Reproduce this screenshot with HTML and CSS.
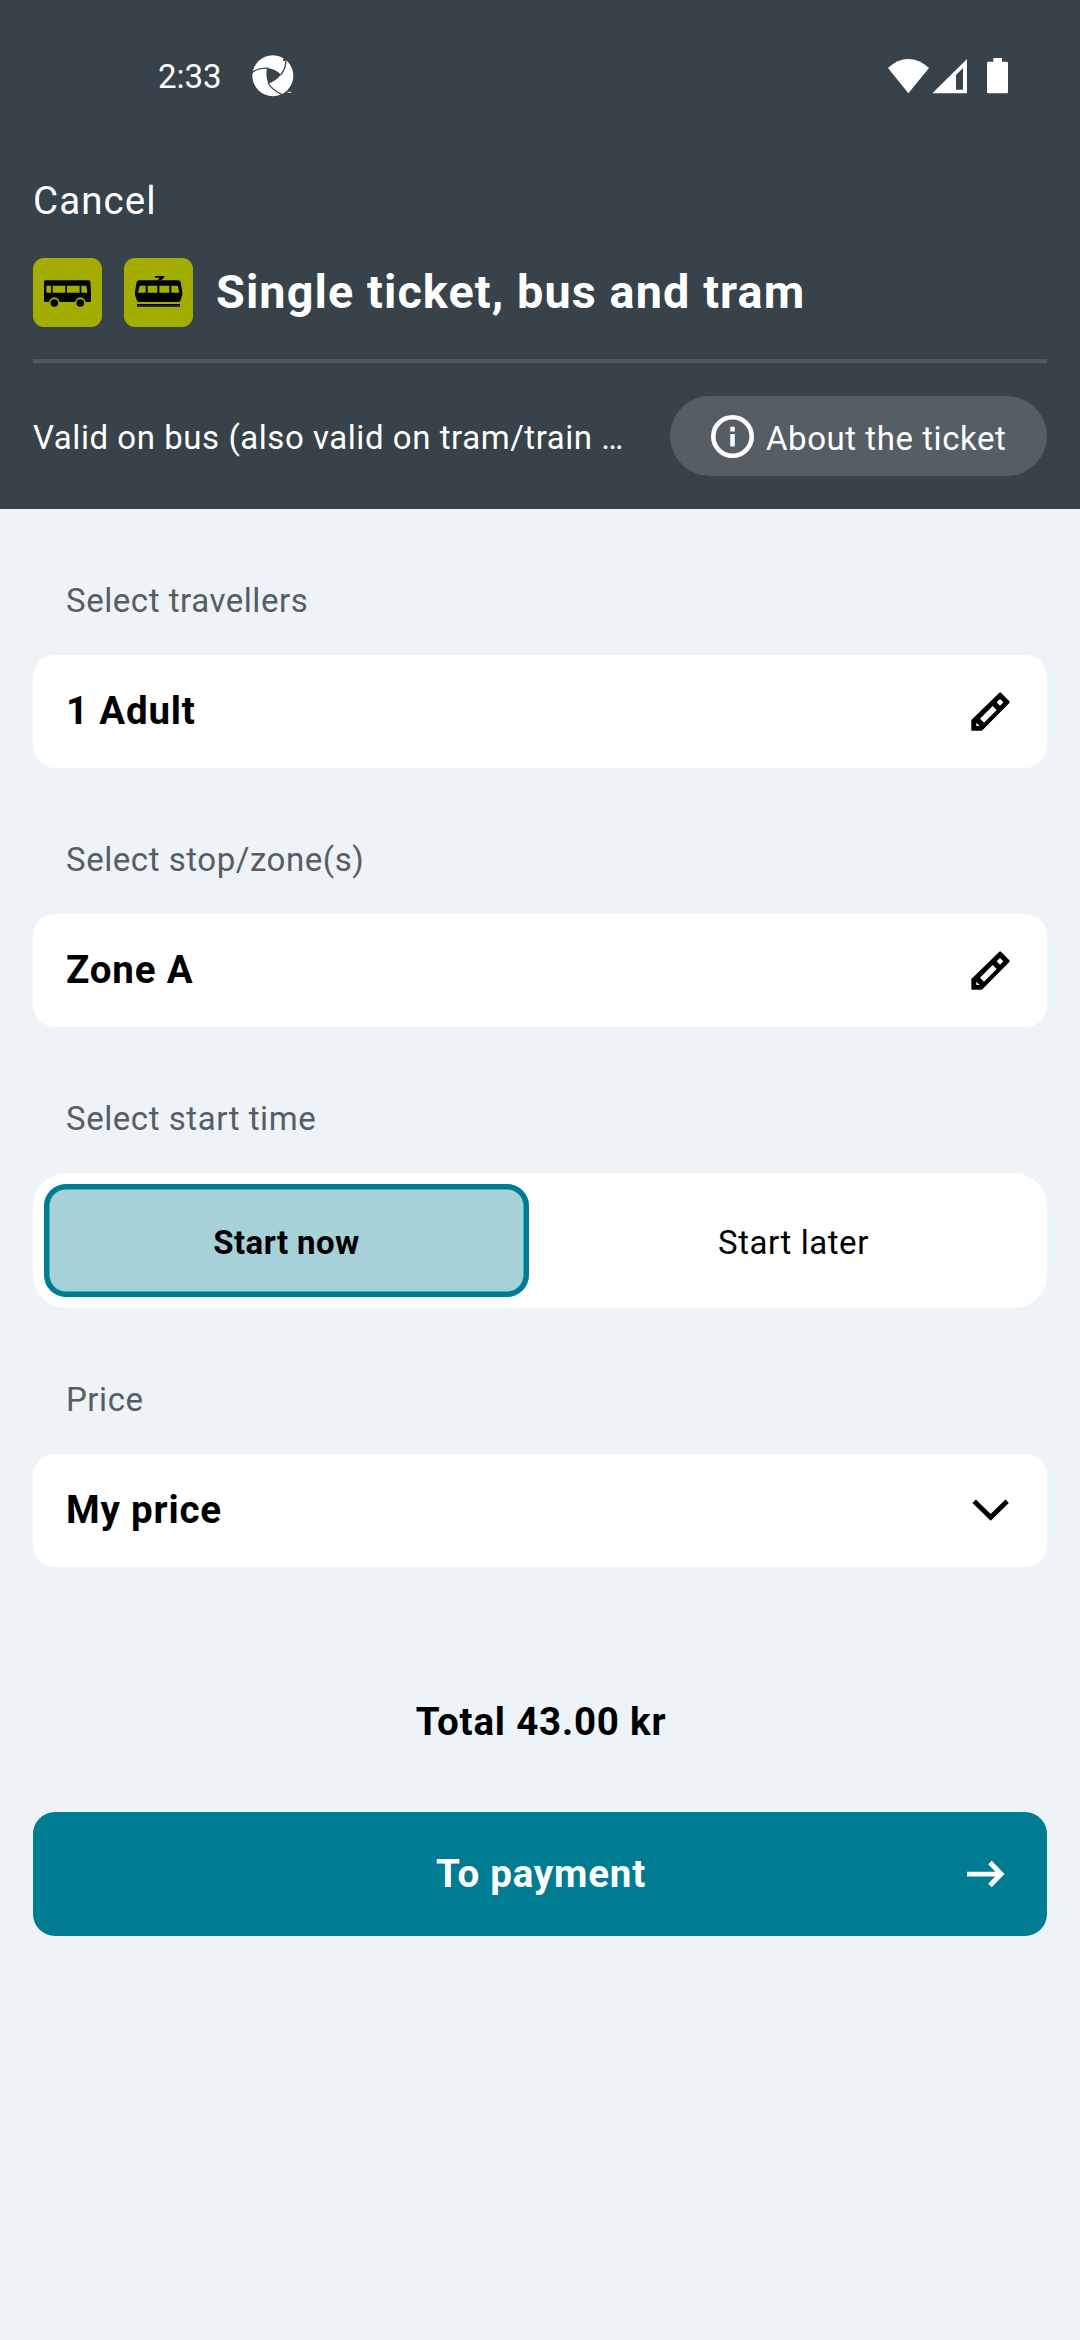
FILE: index.html
```html
<!DOCTYPE html>
<html lang="en">
<head>
<meta charset="utf-8">
<title>Single ticket, bus and tram</title>
<link rel="stylesheet" href="styles.css">
</head>
<body>
<header class="header">
  <div class="status">
    <span class="clock">2:33</span>
    <svg class="app-icon" viewBox="32 26 132 132">
      <circle cx="97.500" cy="91" r="61.500" fill="#fff"/>
      <path d="M80 69Q105 70 122 88Q106 107 84 115Q75 92 80 69Z" fill="#37424a"/>
      <path d="M34 82Q56 66 86 69M137 42Q137 70 121 89M83 113Q98 136 124 147" fill="none" stroke="#37424a" stroke-width="4"/>
      <path d="M131 31L136 46L128 47ZM31 76L38 75L36 87Z" fill="#37424a"/>
      <path d="M141 141h12" stroke="#b9bdc0" stroke-width="4"/>
    </svg>
    <div class="signals">
      <svg class="wifi" viewBox="84 52 123 108"><path d="M84 82Q112 55 145 55T207 82L145 158Z" fill="#fff"/></svg>
      <svg class="cell" viewBox="216 52 105 108"><path d="M217 158L321 55V158Z" fill="#fff"/><path d="M288 103L309 82V147H288Z" fill="#37424a"/></svg>
      <svg class="battery" viewBox="381 52 63 108"><path d="M400 52h26v11h14q4 0 4 4v87q0 4-4 4h-55q-4 0-4-4V67q0-4 4-4h15Z" fill="#fff"/></svg>
    </div>
  </div>
  <div class="cancel">Cancel</div>
  <div class="title-row">
    <svg class="mode" viewBox="39 54 207 207">
      <path d="M76 121H206Q210 121 211 126L213 155V182Q213 186 209 186H76Q72 186 72 182V126Q72 121 76 121Z"/>
      <path d="M79 137H93V158H81Q79 158 79 155ZM98 137H136V158H98ZM141 137H179V158H141ZM184 137H199L202 155Q202 158 199 158H184Z" fill="#a3ad00"/>
      <circle cx="103" cy="188" r="16" fill="#a3ad00"/><circle cx="181" cy="188" r="16" fill="#a3ad00"/>
      <circle cx="103" cy="189" r="11.500"/><circle cx="181" cy="189" r="11.500"/>
    </svg>
    <svg class="mode" viewBox="312 54 207 207">
      <path d="M357 121H475Q480 121 482 126L487 155V165L481 182Q479 186 475 186H357Q353 186 351 182L345 165V155L350 126Q352 121 357 121Z"/>
      <path d="M405 108H433V112L424 121H412L420 113H405Z"/>
      <path d="M359 137H377V158H354ZM383 137H412V158H383ZM418 137H448V158H418ZM454 137H473L478 158H454Z" fill="#a3ad00"/>
      <path d="M351 192H480V200H351Z"/><path d="M351 197.500H480" stroke="#5b6100" stroke-width="1.500"/>
    </svg>
    <h1 class="title">Single ticket, bus and tram</h1>
  </div>
  <div class="info-row">
    <span class="validity">Valid on bus (also valid on tram/train …</span>
    <div class="about">
      <svg class="about-icon" viewBox="0 0 43 43" fill="none" stroke="#fff"><circle cx="21.500" cy="21.500" r="19.200" stroke-width="4.600"/><path d="M21.500 11.800v4.700M21.500 19v12.500" stroke-width="4.500"/></svg>
      <span class="about-text">About the ticket</span>
    </div>
  </div>
</header>
<main class="form">
  <div class="label">Select travellers</div>
  <div class="card"><span>1 Adult</span>
    <svg class="icon" viewBox="90 152 126 126"><path fill-rule="evenodd" d="M94 239L178 157Q180 155 183 157L208 183Q210 185 208 188L128 269Q126 271 123 271H97Q94 271 94 268ZM120 235L132 247L170 209L158 197ZM170 186L180 196L190 186L180 176ZM109 247V257H119Z"/></svg>
  </div>
  <div class="label">Select stop/zone(s)</div>
  <div class="card"><span>Zone A</span>
    <svg class="icon" viewBox="90 152 126 126"><path fill-rule="evenodd" d="M94 239L178 157Q180 155 183 157L208 183Q210 185 208 188L128 269Q126 271 123 271H97Q94 271 94 268ZM120 235L132 247L170 209L158 197ZM170 186L180 196L190 186L180 176ZM109 247V257H119Z"/></svg>
  </div>
  <div class="label">Select start time</div>
  <div class="segments">
    <div class="segment selected">Start now</div>
    <div class="segment">Start later</div>
  </div>
  <div class="label">Price</div>
  <div class="card"><span>My price</span>
    <svg class="icon" viewBox="90 148.500 126 126"><path d="M102.500 182.500L152 230.500L201.500 182.500" fill="none" stroke="#000" stroke-width="14.500"/></svg>
  </div>
  <div class="total">Total 43.00 kr</div>
  <div class="pay"><span></span><span class="pay-text">To payment</span>
    <svg class="pay-icon" viewBox="0 0 42 42" fill="none" stroke="#fff"><path d="M2 21.200H36" stroke-width="4.700"/><path d="M25 9.500L36 21L25 32.500" stroke-width="5"/></svg>
  </div>
</main>
</body>
</html>
```
FILE: styles.css
```css
* { box-sizing: border-box; }
body {
  margin: 0;
  min-height: 2340px;
  background: #edf3f6;
  color: #000;
  font-family: Roboto, sans-serif;
  font-size: 33px;
  letter-spacing: 0.55px;
}
svg { display: block; flex: none; }
.header {
  height: 509px;
  padding: 0 33px;
  background: #37424a;
  color: #fff;
}
.status {
  display: flex;
  align-items: center;
  height: 151px;
  padding: 0 39px 0 125px;
}
.clock { padding-top: 3px; line-height: 40px; letter-spacing: 0; }
.app-icon { width: 44px; height: 44px; margin-left: 29px; }
.signals { display: flex; margin-left: auto; }
.wifi { width: 41px; height: 36px; }
.cell { width: 35px; height: 36px; margin-left: 3px; }
.battery { width: 21px; height: 36px; margin-left: 20px; }
.cancel { height: 107px; padding-top: 28px; font-size: 38.5px; line-height: 44px; letter-spacing: 1.1px; }
.title-row { display: flex; align-items: center; height: 69px; gap: 22px; }
.mode { width: 69px; height: 69px; border-radius: 11px; background: #a3ad00; }
.title {
  margin: 0;
  padding: 0 0 2px 1px;
  font-size: 46.75px;
  line-height: 54px;
  font-weight: 700;
  letter-spacing: 1.1px;
}
.info-row {
  display: flex;
  align-items: center;
  justify-content: space-between;
  height: 117px;
  margin-top: 32px;
  padding-top: 33px;
  border-top: 4px solid #4f5860;
}
.validity { line-height: 40px; padding-top: 3px; }
.about {
  display: flex;
  align-items: center;
  width: 377px;
  height: 80px;
  padding-left: 41px;
  border-radius: 40px;
  background: #555d65;
}
.about-icon { width: 43px; height: 43px; }
.about-text { margin-left: 12px; padding-top: 5px; line-height: 40px; }
.form { padding: 0 33px; }
.label { height: 146px; padding: 72px 33px 34px; line-height: 40px; color: #555e65; }
.card {
  display: flex;
  align-items: center;
  justify-content: space-between;
  height: 113px;
  padding: 0 35px 0 33px;
  border-radius: 22px;
  background: #fff;
  font-size: 38.5px;
  font-weight: 700;
  letter-spacing: 0.8px;
}
.card span { padding-bottom: 2px; }
.icon { width: 42px; height: 42px; }
.segments {
  display: grid;
  grid-template-columns: 1fr 1fr;
  gap: 22px;
  height: 135px;
  padding: 11px;
  border-radius: 33px;
  background: #fff;
}
.segment {
  display: flex;
  align-items: center;
  justify-content: center;
  padding-top: 4px;
  border-radius: 22px;
}
.selected {
  box-shadow: inset 0 0 0 5.5px #007c92;
  background: #a6d1d9;
  font-weight: 700;
  letter-spacing: 0.4px;
}
.total {
  margin: 133px 0 68px;
  padding-left: 2px;
  line-height: 44px;
  font-size: 38.5px;
  font-weight: 700;
  letter-spacing: 0.8px;
  text-align: center;
}
.pay {
  display: grid;
  grid-template-columns: 42px 1fr 42px;
  align-items: center;
  height: 124px;
  padding: 0 40px;
  border-radius: 22px;
  background: #007c92;
  color: #fff;
  font-size: 38.5px;
  font-weight: 700;
  letter-spacing: 0.8px;
}
.pay-text { padding: 0 0 2px 2px; text-align: center; }
```
